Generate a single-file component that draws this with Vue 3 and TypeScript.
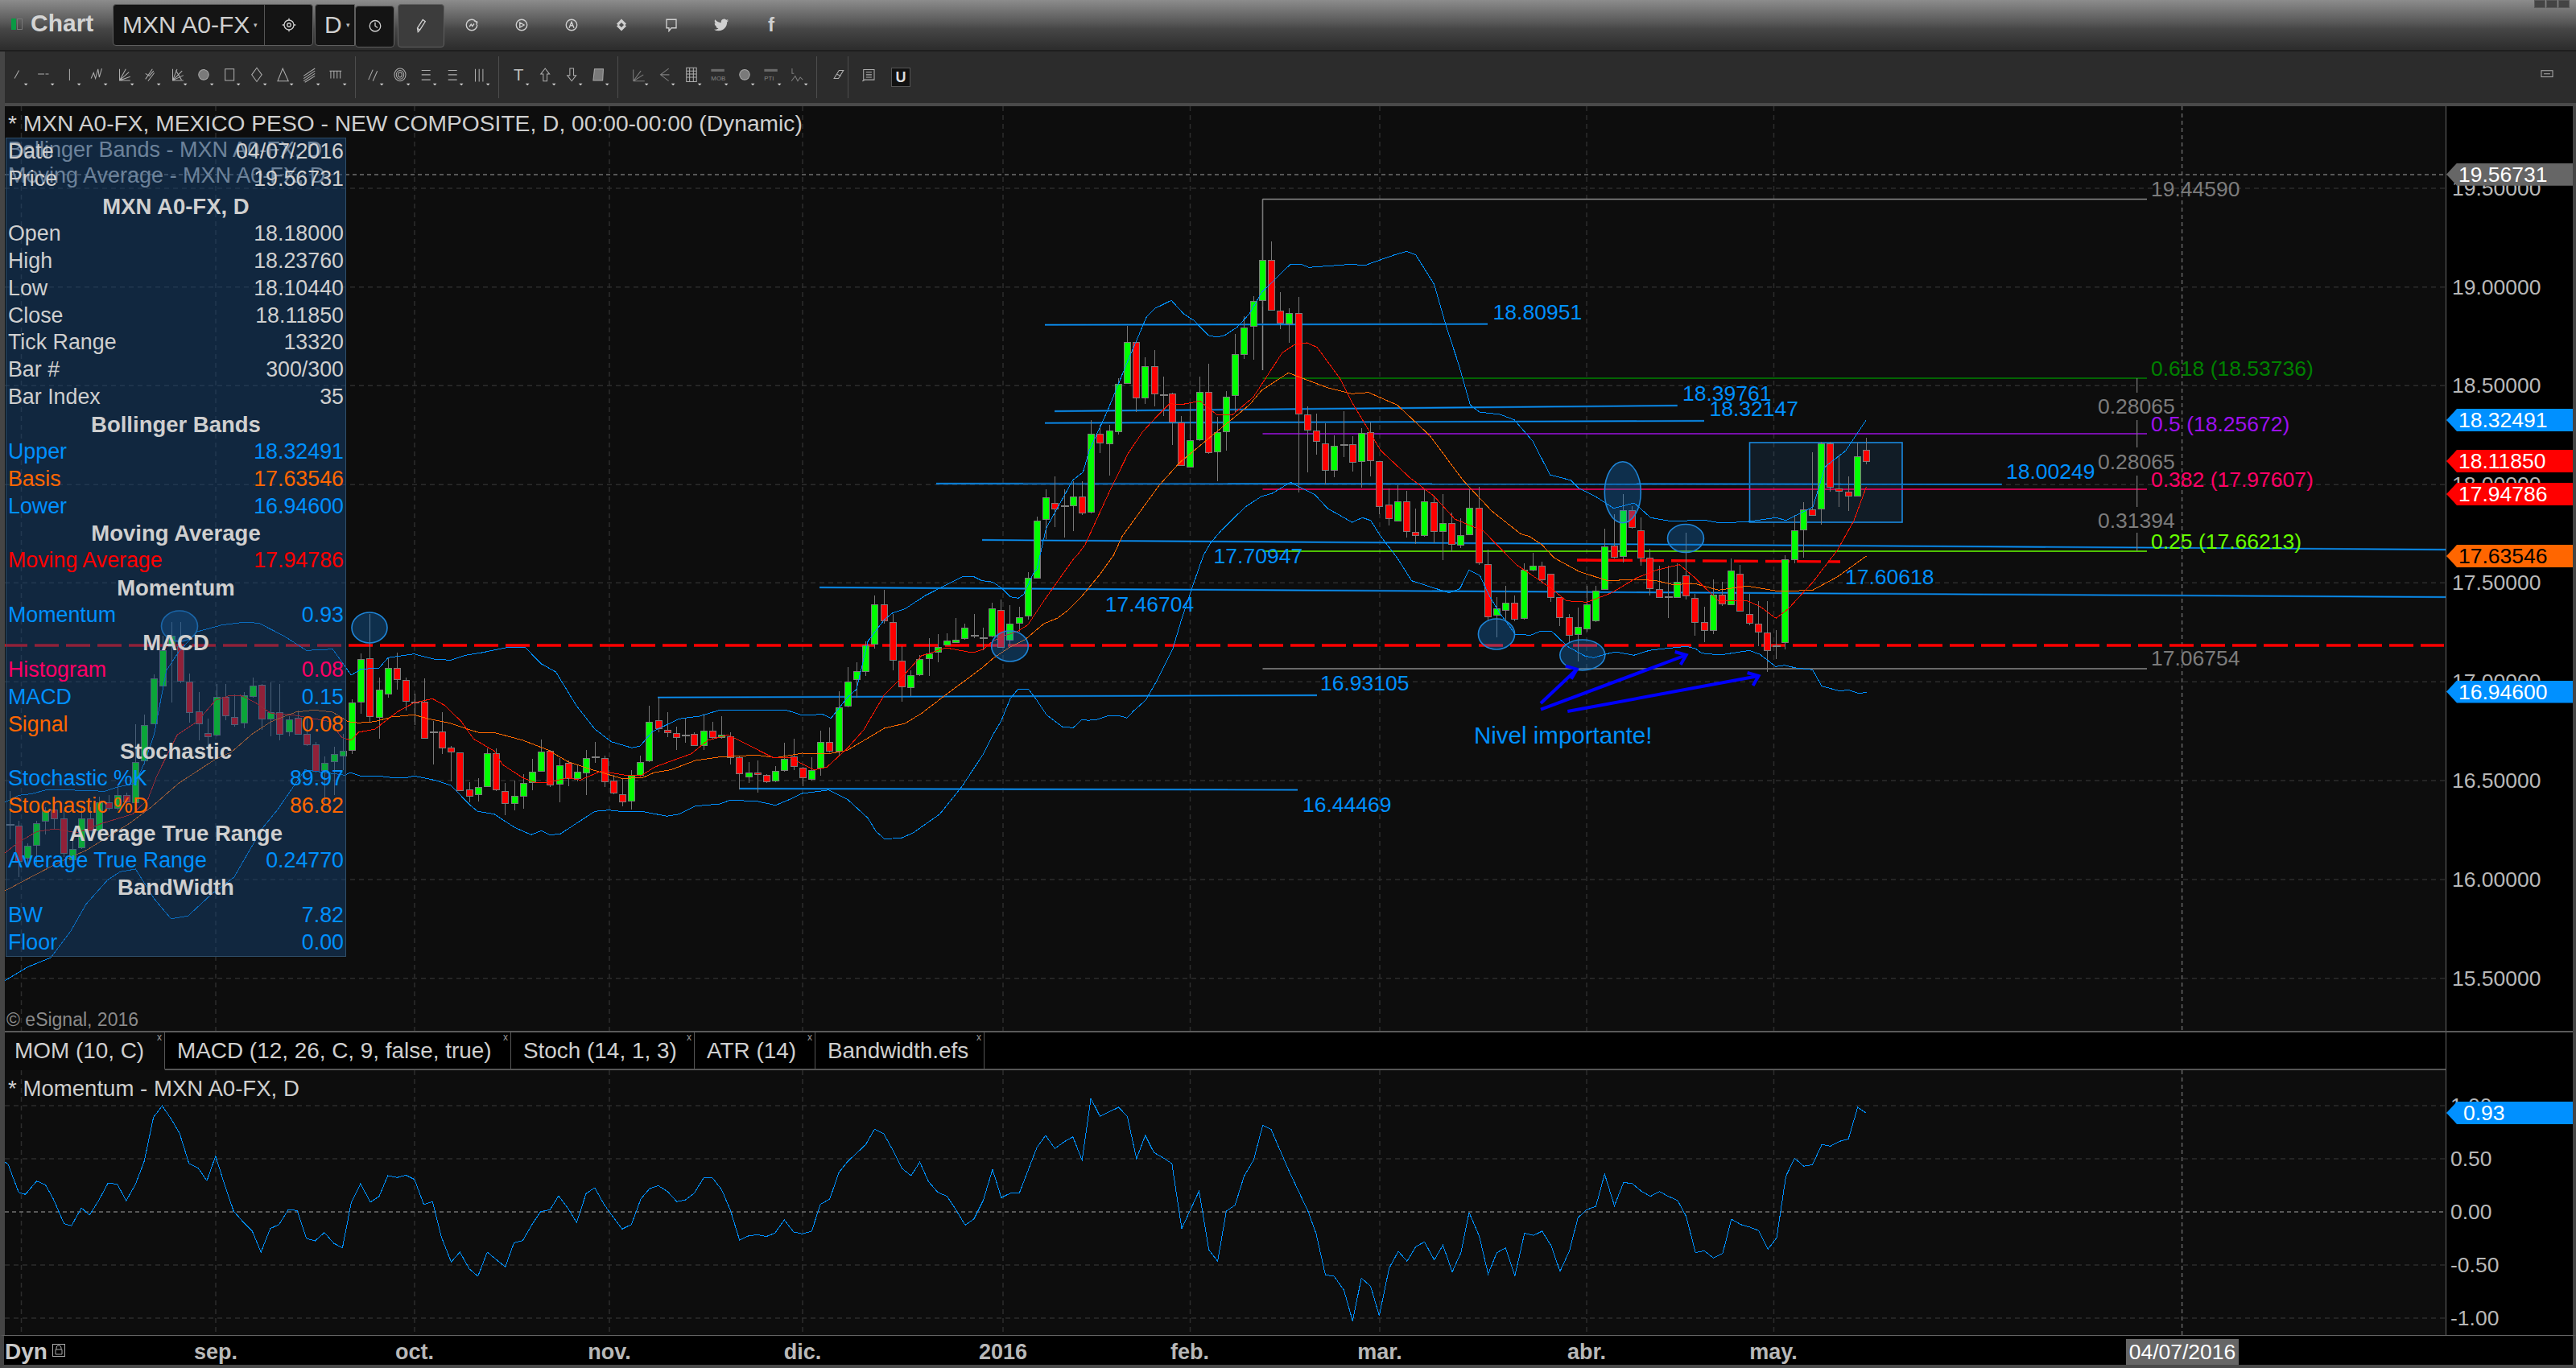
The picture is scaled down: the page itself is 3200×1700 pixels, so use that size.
<script setup lang="ts">
type P = [number, number]
type C = [number, number, number, number, number]

const map = (pts: P[], ox: number, sx: number, oy: number, sy: number): P[] =>
  pts.map(([x, y]) => [ox + x / sx, oy + y / sy] as P)
const line = (pts: P[]) => pts.map(([x, y]) => `${x.toFixed(1)},${y.toFixed(1)}`).join(' ')

const z3 = (p: P[]) => map(p, 0, 2.613, 740, 3)
const z8 = (p: P[]) => map(p, 420, 1.96, 700, 3)
const z9 = (p: P[]) => map(p, 1200, 1.96, 220, 3)
const z4 = (p: P[]) => map(p, 1900, 1.96, 400, 3)
const z10 = (p: P[]) => map(p, 1800, 2.613, 700, 3)
const z11 = (p: P[]) => map(p, 1200, 3, 690, 3)

const upper = line([
  ...z3([[10,775],[60,745],[100,740],[150,725],[220,725],[340,730],[380,715],[440,700],[470,620],[500,520],[540,280],[580,210],[640,135],[720,110],[790,100],[840,103],[920,150],[995,205],[1080,200],[1140,297]]),
  ...z8([[55,395],[100,390],[122,352],[185,338],[235,358],[275,361],[310,343],[350,333],[415,313],[455,313],[495,375],[530,405],[580,530],[625,618],[665,665],[715,688],[735,682],[765,628],[830,580],[880,570],[930,547],[1090,547],[1130,566],[1180,563],[1200,578],[1240,500],[1262,470],[1290,290],[1330,210],[1350,185],[1380,170],[1430,120],[1520,50]]),
  ...z11([[30,80],[60,95],[100,100],[130,120],[165,155],[195,160],[215,145],[250,70],[265,50]]),
  ...z9([[195,1310],[260,1130],[285,1100],[300,1020],[345,870],[390,700],[440,520],[460,490],[500,460],[530,510],[555,535],[590,590],[610,597],[630,590],[660,560],[690,510],[720,430],[790,325],[815,325],[835,337],[940,325],[970,330],[1040,292],[1073,277],[1095,290],[1140,400],[1170,560],[1200,700],[1228,850],[1250,876],[1300,885],[1335,905],[1380,985]]),
  ...z4([[50,570],[100,590],[120,620],[160,650],[205,695],[255,675],[295,730],[340,742],[430,740],[465,750],[530,745],[600,730],[625,740],[690,690],[720,540],[770,480],[820,365]]),
])
const lower = line([
  ...z3([[10,1440],[90,1385],[165,1350],[230,1250],[280,1150],[350,1060],[390,1030],[440,1020],[500,1130],[555,1205],[610,1195],[690,1110],[760,1050],[850,870],[900,800],[990,650],[1055,660],[1120,670]]),
  ...z8([[30,780],[55,793],[110,795],[135,800],[165,800],[185,793],[240,810],[275,828],[320,900],[340,925],[380,935],[430,985],[470,1012],[495,997],[515,1012],[540,1010],[580,970],[625,925],[660,920],[700,927],[740,925],[800,943],[830,935],[870,905],[930,897],[955,883],[1020,887],[1065,902],[1100,880],[1130,858],[1195,845],[1240,880],[1290,950],[1310,1000],[1330,1027],[1370,1025],[1400,1005],[1465,935],[1520,830]]),
  ...z11([[65,740],[100,670],[130,620],[165,535],[195,498],[232,498],[260,535],[300,595],[360,640],[400,643],[433,612],[455,616],[490,612],[530,598],[570,598],[600,607],[625,580],[670,540],[710,470],[770,350],[800,250],[850,100],[885,0]]),
  ...z9([[595,1365],[620,1320],[680,1230],[720,1190],[745,1180],[790,1138],[850,1185],[880,1235],[940,1287],[965,1270],[985,1280],[1010,1340],[1050,1420],[1085,1505]]),
  ...z10([[0,110],[35,95],[65,25],[100,45],[130,120],[165,185],[215,265],[265,268],[300,252],[335,255],[385,310],[440,345],[470,352],[505,340],[540,330],[600,343],[650,325],[700,318],[770,310],[800,318],[820,335],[880,342],[975,325],[1010,340],[1060,385],[1090,380],[1125,390],[1180,397],[1210,458],[1265,475],[1300,473],[1330,485],[1355,481]]),
])
const red = line([
  ...z3([[10,965],[60,920],[120,880],[180,870],[250,885],[330,850],[430,815],[480,760],[510,670],[575,520],[640,470],[700,390],[740,375],[780,372],[830,400],[880,440],[950,445],[1070,470],[1110,530],[1140,540]]),
  ...z8([[50,630],[90,618],[145,553],[185,520],[230,505],[260,530],[300,590],[330,655],[380,700],[400,750],[450,800],[480,817],[510,817],[560,800],[590,808],[640,775],[700,790],[740,790],[770,760],[860,710],[900,660],[950,640],[1060,725],[1100,725],[1160,770],[1190,760],[1240,690],[1280,620],[1330,490],[1370,430],[1420,345],[1480,315],[1540,332]]),
  ...z11([[30,362],[65,350],[100,320],[130,305],[190,285],[230,260],[290,170],[350,85],[400,15],[415,0]]),
  ...z9([[290,1370],[350,1170],[395,1030],[430,950],[460,900],[495,845],[525,848],[570,835],[610,885],[650,885],[700,820],[770,655],[800,625],[830,618],[855,635],[910,750],[940,840],[1010,1020],[1080,1120],[1140,1190],[1190,1275],[1260,1320],[1340,1445]]),
  ...z4([[50,990],[90,1040],[140,1045],[200,1010],[260,955],[310,925],[365,905],[400,950],[460,1040],[530,1040],[560,1060],[600,1105],[630,1070],[690,970],[750,850],[790,740],[820,615]]),
])
const orange = line([
  ...z3([[10,1105],[100,1050],[200,990],[280,950],[420,850],[490,790],[580,700],[700,610],[750,585],[820,515],[880,470],[960,435],[1020,427],[1080,435],[1130,470]]),
  ...z8([[50,595],[90,590],[130,573],[185,565],[220,580],[270,595],[340,630],[385,633],[450,660],[510,695],[560,740],[620,770],[690,802],[740,800],[770,780],[810,770],[870,735],[930,722],[1020,715],[1065,725],[1130,708],[1195,710],[1240,697],[1330,615],[1380,597],[1420,560],[1480,490]]),
  ...z11([[60,420],[100,385],[160,345],[220,315],[290,255],[340,235],[380,205],[430,155],[500,70],[550,0]]),
  ...z9([[380,1340],[470,1150],[520,1065],[610,950],[690,850],[720,795],[785,730],[810,745],[880,785],[940,808],[980,803],[1050,850],[1130,965],[1210,1130],[1280,1245],[1350,1330]]),
  ...z4([[0,800],[30,830],[60,880],[120,930],[190,965],[260,960],[310,965],[350,980],[400,975],[460,1000],[530,985],[610,1005],[690,1000],[750,950],[820,873]]),
])

const mom6: P[] = [[5,608],[12,620],[28,725],[38,733],[55,683],[68,697],[80,750],[96,842],[107,850],[122,783],[134,810],[148,755],[162,690],[176,695],[189,757],[203,695],[216,610],[230,445],[243,403],[256,450],[269,505],[283,617],[297,635],[310,682],[323,590],[337,700],[350,795],[364,835],[378,870],[391,948],[405,860],[418,845],[432,790],[445,793],[459,897],[472,906],[486,875],[500,915],[513,932],[526,765],[540,693],[555,762],[568,740],[581,663],[595,670],[608,661],[621,677],[635,770],[648,760],[661,890],[676,985],[689,948],[703,1010],[716,1038],[730,948],[743,975],[757,1003],[770,913],[783,905],[797,845],[810,797],[824,790],[837,738],[851,785],[864,838],[878,730],[891,708],[905,770],[918,815],[932,862],[946,845],[960,750],[973,712],[986,700],[1000,722],[1014,760],[1027,753],[1040,728],[1054,672],[1067,670],[1081,715],[1094,790],[1108,903],[1121,888],[1135,883],[1148,890],[1161,877],[1175,828],[1189,873],[1202,880],[1216,870],[1229,770],[1243,750],[1257,650],[1270,610],[1297,547],[1310,490],[1324,507],[1338,570],[1351,635],[1365,663],[1378,612],[1391,685],[1405,725],[1419,740],[1432,790],[1446,847],[1459,825],[1473,755],[1487,640],[1500,745],[1514,728],[1527,728]]
const mom12: P[] = [[12,258],[28,213],[45,262],[62,237],[78,218],[95,305],[111,75],[128,142],[162,108],[178,142],[195,300],[211,213],[227,277],[245,298],[260,318],[278,560],[310,420],[328,640],[344,682],[360,495],[376,473],[393,363],[410,305],[427,175],[442,190],[475,345],[510,495],[525,580],[542,733],[558,738],[576,790],[592,905],[608,745],[625,775],[641,885],[659,708],[676,645],[692,682],[708,628],[724,610],[742,677],[758,622],[775,722],[791,650],[806,500],[825,590],[841,730],[857,650],[873,632],[890,737],[908,577],[924,586],[940,570],[957,625],[973,720],[990,645],[1006,520],[1022,490],[1039,477],[1055,357],[1073,475],[1090,388],[1106,393],[1122,420],[1139,440],[1156,422],[1172,440],[1189,455],[1205,515],[1222,650],[1238,643],[1255,670],[1272,652],[1288,525],[1305,545],[1322,555],[1338,568],[1355,637],[1371,595],[1388,365],[1404,298],[1421,328],[1437,322],[1454,247],[1470,253],[1487,235],[1503,226],[1520,108],[1536,130]]
const momentum = line([...map(mom6, 0, 1.206, 1240, 3), ...map(mom12, 1280, 1.479, 1340, 3)])

const seg = (rows: C[], oy: number): C[] =>
  rows.map(([a, b, c, d, t]) => [oy + a / 3, oy + b / 3, oy + c / 3, oy + d / 3, t] as C)

const raw: C[] = [
  ...seg([[730,855,855,910,2],[840,857,990,1050,0],[925,932,977,1005,1],[840,850,932,1010,1],[790,800,838,890,1],[752,798,830,870,0],[800,832,962,975,0],[880,945,985,995,1],[790,832,940,945,1],[790,830,875,880,0],[750,772,878,882,1],[745,770,790,800,0],[705,745,793,800,1],[735,745,770,780,0],[480,620,770,775,1],[445,482,615,630,1],[295,308,475,480,1],[150,205,338,350,1],[100,150,190,400,1],[100,190,320,328,0],[290,320,433,475,0],[360,433,478,540,0],[460,512,523,560,0],[330,377,517,525,1],[330,378,448,465,0],[370,452,478,490,0],[360,373,475,495,1],[305,337,376,380,1],[330,332,457,500,0],[325,436,460,525,1],[330,436,517,540,0],[450,463,508,525,1],[430,457,517,520,0],[455,517,556,560,0],[545,554,652,660,0],[600,623,650,770,1],[565,590,617,745,1],[515,580,598,650,1]], 740),
  ...seg([[508,520,697,710,1],[335,358,517,562,1],[190,355,570,595,0],[425,472,575,655,1],[355,391,487,502,1],[333,391,433,470,0],[425,436,515,550,0],[487,519,519,603,2],[430,517,652,655,0],[588,630,630,750,2],[555,628,688,712,0],[682,688,703,812,0],[705,706,847,850,0],[815,844,868,890,0],[800,835,862,888,1],[690,709,832,835,1],[690,709,845,850,0],[820,850,895,938,0],[810,868,895,922,1],[785,820,868,915,1],[728,778,817,845,1],[658,703,775,778,1],[695,700,827,835,0],[725,754,822,890,1],[735,745,802,830,0],[750,778,802,812,1],[695,725,778,865,1],[665,722,722,745,2],[718,727,814,835,0],[790,811,857,860,0],[800,862,888,905,0],[770,790,886,918,1],[718,740,787,795,1],[530,592,737,740,1],[500,586,616,630,0],[555,622,631,648,0],[610,633,647,695,0],[578,641,641,670,2],[630,637,680,682,0],[560,625,680,695,1],[590,625,650,655,0],[570,640,650,655,1],[630,646,724,750,0],[720,724,785,842,0],[740,781,796,820,1],[735,781,787,855,0],[785,790,815,820,0],[755,775,810,815,1],[668,730,772,778,1],[655,720,757,770,0],[760,763,799,830,0],[722,770,802,810,1],[625,667,763,792,1],[612,667,700,705,0],[478,536,697,720,1],[388,442,532,537,1],[368,403,432,500,1],[290,305,400,420,1],[120,154,300,318,1],[98,154,214,225,0],[190,218,360,400,0],[310,364,460,515,0],[400,416,462,495,1],[342,356,412,420,1],[278,335,352,420,1],[265,311,330,370,1],[260,289,303,305,1],[205,284,292,295,1],[225,241,280,285,1],[190,269,269,280,2]], 700),
  ...seg([[270,308,308,355,2],[178,197,300,305,1],[165,203,340,345,0],[187,254,313,340,1],[192,230,250,285,1],[62,85,227,240,1]], 690),
  ...seg([[1265,1280,1492,1497,1],[1165,1195,1277,1350,1],[1115,1214,1235,1305,0],[1165,1227,1227,1345,2],[1135,1192,1225,1320,1],[1135,1190,1249,1260,0],[905,958,1250,1253,1],[925,958,990,1030,0],[925,946,995,1113,1],[750,770,946,960,1],[555,614,767,770,1],[612,614,822,875,0],[672,706,823,845,1],[645,706,808,855,0],[745,812,812,890,2],[805,808,913,1000,0],[890,914,1072,1075,0],[840,982,1080,1082,1],[745,800,978,985,1],[697,800,1024,1032,0],[895,952,1024,1133,1],[798,820,948,1020,1],[585,661,814,875,1],[520,560,658,678,1],[443,463,556,680,1],[82,310,460,482,1],[240,310,496,498,0],[430,499,544,568,0],[490,506,544,618,1],[447,506,880,1175,0],[855,886,943,1100,0],[882,946,985,1035,0],[918,992,1092,1145,0],[962,1003,1093,1118,1],[873,998,998,1045,2],[965,997,1063,1098,0],[935,955,1060,1157,1],[915,952,1056,1115,0],[1058,1060,1228,1258,0],[1160,1222,1272,1300,0],[1150,1210,1282,1285,1],[1170,1210,1320,1345,0],[1235,1323,1336,1368,0],[1160,1210,1336,1340,1],[1188,1213,1320,1365,0],[1182,1291,1320,1428,1],[1250,1291,1369,1398,0],[1272,1336,1372,1382,1],[1160,1234,1333,1336,1],[1155,1234,1438,1445,0]], 220),
  ...seg([[-50,2,197,215,0],[125,169,192,275,1],[85,146,172,215,1],[120,146,205,215,0],[0,25,205,210,1]], 700),
  ...seg([[860,910,925,930,1],[895,910,962,975,0],[938,940,1027,1045,0],[1025,1027,1102,1135,0],[1090,1102,1168,1195,0],[1065,1138,1165,1265,1],[985,1054,1145,1155,1],[985,1003,1115,1118,1],[770,838,998,1000,1],[718,835,878,882,0],[642,703,875,898,1],[688,703,767,770,0],[730,778,880,910,0],[845,878,993,1020,0],[910,995,1024,1020,0],[910,1025,1025,1103,2],[900,970,1026,1030,1],[785,946,1020,1035,0],[1015,1028,1117,1170,0],[1063,1118,1147,1195,0],[960,1017,1150,1165,1],[970,1017,1050,1060,0],[882,926,1051,1052,1],[905,938,1075,1078,0],[1015,1088,1120,1130,0],[1042,1124,1153,1210,0],[1042,1157,1224,1305,0],[1150,1208,1208,1258,2],[870,884,1192,1220,1],[720,776,883,900,1],[672,700,775,878,1],[485,700,720,722,0],[448,454,697,755,1],[447,454,616,632,0],[495,620,628,690,0],[575,632,646,705,0],[450,500,647,648,1],[432,476,517,530,0]], 400),
]
const candles = raw.map(([hi, top, bot, lo, t], i) => ({
  x: Math.round(11.5 + 11.197 * i) + 0.5,
  hi: Math.round(hi), top: Math.round(top), h: Math.max(Math.round(bot - top), 1), lo: Math.round(lo), t,
}))

const hGrid = [234, 356.7, 479.3, 602.3, 724.3, 847.3, 970, 1093, 1215.7]
const vGrid = [26.5, 268, 515, 757, 997, 1246, 1478.5, 1714, 1971, 2203.5]
const hGridM = [1374, 1440, 1572, 1638]

const fibs = [
  { y: 470, c: '#008000' }, { y: 539, c: '#9d10e0' }, { y: 608, c: '#ff0066' }, { y: 685, c: '#66ff00' },
  { y: 831, c: '#8a8a8a' }, { y: 247.5, c: '#8a8a8a' },
]
const trends = [
  [1298, 403.7, 1848, 402.7], [1310, 511, 2083.7, 504], [1298, 525.7, 2117, 523], [1163, 601, 2486.7, 601.7],
  [1220, 671, 3038, 683], [1018, 730, 3038, 742], [817, 866.7, 1636, 864], [918, 980, 1612, 981.5],
]
const measure = [[470, 488], [522, 556], [591, 630], [662, 685]]
const ellipses = [
  [223, 778, 22.5, 19], [459, 780, 22, 19], [1254.5, 803, 22.8, 19], [1859, 788, 22.6, 19],
  [1965.8, 814, 28, 19], [2015.8, 611.7, 22.5, 38], [2094, 669, 22.5, 17.5],
]
const arrows = [[1914, 874, 1958.8, 831.7], [1914, 881.7, 2094.7, 814], [1947.3, 884, 2184.6, 840]]
const labels = [
  { x: 1854.6, y: 388, t: '18.80951', c: '#0090ff' }, { x: 2090, y: 489, t: '18.39761', c: '#0090ff' },
  { x: 2123.5, y: 508, t: '18.32147', c: '#0090ff' }, { x: 2492, y: 586, t: '18.00249', c: '#0090ff' },
  { x: 1507.6, y: 691, t: '17.70947', c: '#0090ff' }, { x: 2292, y: 716.7, t: '17.60618', c: '#0090ff' },
  { x: 1372.7, y: 751, t: '17.46704', c: '#0090ff' }, { x: 1640, y: 849, t: '16.93105', c: '#0090ff' },
  { x: 1618, y: 1000, t: '16.44469', c: '#0090ff' },
  { x: 2672, y: 235, t: '19.44590', c: '#7c7c7c' }, { x: 2672, y: 458, t: '0.618 (18.53736)', c: '#008000' },
  { x: 2606, y: 505, t: '0.28065', c: '#7c7c7c' }, { x: 2672, y: 527, t: '0.5 (18.25672)', c: '#9d10f0' },
  { x: 2606, y: 574, t: '0.28065', c: '#7c7c7c' }, { x: 2672, y: 595.5, t: '0.382 (17.97607)', c: '#ff0066' },
  { x: 2606, y: 647, t: '0.31394', c: '#7c7c7c' }, { x: 2672, y: 672.6, t: '0.25 (17.66213)', c: '#66ff00' },
  { x: 2672, y: 818, t: '17.06754', c: '#7c7c7c' },
]

const axisTicks = [
  { y: 234, t: '19.50000' }, { y: 356.7, t: '19.00000' }, { y: 479.3, t: '18.50000' }, { y: 602.3, t: '18.00000' },
  { y: 724.3, t: '17.50000' }, { y: 847.3, t: '17.00000' }, { y: 970, t: '16.50000' }, { y: 1093, t: '16.00000' },
  { y: 1215.7, t: '15.50000' },
]
const axisTags = [
  { y: 216.7, t: '19.56731', bg: '#666666', c: '#ffffff' }, { y: 522, t: '18.32491', bg: '#0090ff', c: '#ffffff' },
  { y: 573, t: '18.11850', bg: '#ff0000', c: '#ffffff' }, { y: 614, t: '17.94786', bg: '#ff0000', c: '#ffffff' },
  { y: 691, t: '17.63546', bg: '#ff6600', c: '#000000' }, { y: 859.5, t: '16.94600', bg: '#0090ff', c: '#ffffff' },
]
const momTicks = [
  { y: 1374, t: '1.00' }, { y: 1440, t: '0.50' }, { y: 1506, t: '0.00' }, { y: 1572, t: '-0.50' }, { y: 1638, t: '-1.00' },
]

type Row = { l?: string; v?: string; h?: string; c?: string }
const rows: Row[] = [
  { l: 'Date', v: '04/07/2016' }, { l: 'Price', v: '19.56731' }, { h: 'MXN A0-FX, D' },
  { l: 'Open', v: '18.18000' }, { l: 'High', v: '18.23760' }, { l: 'Low', v: '18.10440' }, { l: 'Close', v: '18.11850' },
  { l: 'Tick Range', v: '13320' }, { l: 'Bar #', v: '300/300' }, { l: 'Bar Index', v: '35' },
  { h: 'Bollinger Bands' }, { l: 'Upper', v: '18.32491', c: 'blue' }, { l: 'Basis', v: '17.63546', c: 'orange' }, { l: 'Lower', v: '16.94600', c: 'blue' },
  { h: 'Moving Average' }, { l: 'Moving Average', v: '17.94786', c: 'red' },
  { h: 'Momentum' }, { l: 'Momentum', v: '0.93', c: 'blue' },
  { h: 'MACD' }, { l: 'Histogram', v: '0.08', c: 'pink' }, { l: 'MACD', v: '0.15', c: 'blue' }, { l: 'Signal', v: '0.08', c: 'orange' },
  { h: 'Stochastic' }, { l: 'Stochastic %K', v: '89.97', c: 'blue' }, { l: 'Stochastic %D', v: '86.82', c: 'orange' },
  { h: 'Average True Range' }, { l: 'Average True Range', v: '0.24770', c: 'blue' },
  { h: 'BandWidth' }, { l: 'BW', v: '7.82', c: 'blue' }, { l: 'Floor', v: '0.00', c: 'blue' },
]

const tabs = [
  { t: 'MOM (10, C)', w: 199, active: true }, { t: 'MACD (12, 26, C, 9, false, true)', w: 430 },
  { t: 'Stoch (14, 1, 3)', w: 228 }, { t: 'ATR (14)', w: 150 }, { t: 'Bandwidth.efs', w: 210 },
]
const months = [
  { x: 268, t: 'sep.' }, { x: 515, t: 'oct.' }, { x: 757, t: 'nov.' }, { x: 997, t: 'dic.' }, { x: 1246, t: '2016' },
  { x: 1478, t: 'feb.' }, { x: 1714, t: 'mar.' }, { x: 1971, t: 'abr.' }, { x: 2203, t: 'may.' },
]

type Tool = { d?: string; t?: string; fill?: boolean; cls?: string }
const group1: Tool[] = [
  { d: 'M7 20L14 7' }, { d: 'M2 13h10M14 13h5' }, { d: 'M10 5v18' }, { d: 'M2 20L6 11l3 9L13 5l2 13 4-14' },
  { d: 'M5 5V23H22M5 23L15 5M5 23L20 10M5 23L22 17' }, { d: 'M4 21L15 5M8 24L18 11M4 12l6 4 7-8' },
  { d: 'M5 5V23H22M5 23L12 5M5 23L20 8M5 23L22 15M10 7l9 15' }, { d: 'M4 14a8 8 0 1 0 16 0a8 8 0 1 0-16 0', fill: true },
  { d: 'M4 5h14v18H4z' }, { d: 'M12 3L20 14 12 25 4 14z' }, { d: 'M11 4L20 24H3z' },
  { d: 'M2 16L20 4M2 20L20 8M2 24L20 12M4 26L20 16' }, { d: 'M3 8V20M8 8V20M13 8V20M18 8V20M1 8H20' },
]
const group2: Tool[] = [
  { d: 'M4 22L11 6M11 24L18 8' }, { d: 'M3 14a9 10 0 1 0 18 0a9 10 0 1 0-18 0M6 14a6 7 0 1 0 12 0a6 7 0 1 0-12 0M9 14a3 4 0 1 0 6 0a3 4 0 1 0-6 0' },
  { d: 'M4 7h14M4 14h14M4 22h14' }, { d: 'M4 7h14M4 14h14M4 22h14' }, { d: 'M5 5v20M11 5v20M17 5v20' },
]
const group3: Tool[] = [
  { t: 'T' }, { d: 'M11 4l7 9h-4v11H8V13H4z' }, { d: 'M8 4h6v11h4l-7 9-7-9h4z' }, { d: 'M5 5h14l-1 18H3z', fill: true, cls: 'dim' },
]
const group4: Tool[] = [
  { d: 'M4 24V6M4 24h18M4 24L16 8M4 24L20 14', cls: 'dim' }, { d: 'M18 4L5 14 18 24M5 14h14', cls: 'dim' },
  { d: 'M4 3h16v22H4zM4 8h16M4 13h16M4 18h16M9 3v22M15 3v22' }, { t: 'MOB', cls: 'small' },
  { d: 'M4 14a8 8 0 1 0 16 0a8 8 0 1 0-16 0', fill: true }, { t: 'PTI', cls: 'small' }, { d: 'M3 4v8h3M2 24l6-8 4 8 4-6 4 4', cls: 'dim' },
]
const caret = 'M22 28h6l-3 3z'
const twitter = 'M23.953 4.57a10 10 0 01-2.825.775 4.958 4.958 0 002.163-2.723c-.951.555-2.005.959-3.127 1.184a4.92 4.92 0 00-8.384 4.482C7.69 8.095 4.067 6.13 1.64 3.162a4.822 4.822 0 00-.666 2.475c0 1.71.87 3.213 2.188 4.096a4.904 4.904 0 01-2.228-.616v.06a4.923 4.923 0 003.946 4.827 4.996 4.996 0 01-2.212.085 4.936 4.936 0 004.604 3.417 9.867 9.867 0 01-6.102 2.105c-.39 0-.779-.023-1.17-.067a13.995 13.995 0 007.557 2.209c9.053 0 13.998-7.496 13.998-13.985 0-.21 0-.42-.015-.63A9.935 9.935 0 0024 4.59z'
const topIcons = [
  'M12 3a9 9 0 1 0 9 9M12 3c3 0 6 2 8 5M16 5l5 2-1 5M8 15l3-4 2 3 3-4',
  'M12 3a9 9 0 1 0 0 18a9 9 0 1 0 0-18M9 8l7 4-7 4z',
  'M12 3a9 9 0 1 0 0 18a9 9 0 1 0 0-18M8 17l4-10 4 10M9.5 13h5',
  'M12 2l8 8-3 3-5-5-5 5-3-3zM12 22l-8-8 3-3 5 5 5-5 3 3z',
  'M4 3h16v14h-8l-4 5v-5H4z',
]
const toolBox = '-4 -5 41 46'
</script>

<template>
  <div class="app">
    <header class="titlebar">
      <span class="logo"><i class="bar-g"></i><i class="bar-o"></i></span>
      <span class="brand">Chart</span>
      <div class="sym-box">
        <span class="sym">MXN A0-FX</span><span class="mini">▾</span>
        <span class="sym-gear">
          <svg class="t-ico" viewBox="0 0 24 24"><circle cx="12" cy="12" r="8" /><circle cx="12" cy="12" r="3" /><path d="M12 1v3M12 20v3M1 12h3M20 12h3" /></svg>
        </span>
      </div>
      <div class="int-box"><span class="sym">D</span><span class="mini">▾</span></div>
      <div class="clock-box">
        <svg class="t-ico" viewBox="0 0 24 24"><circle cx="12" cy="11" r="9" /><path d="M12 5v6l4 3" /></svg>
      </div>
      <div class="pen-box">
        <svg class="t-ico" viewBox="0 0 24 24"><path d="M7 22l-1-6L15 2l4 3-9 14zM6 16l4 3" /></svg>
      </div>
      <span v-for="(d, i) in topIcons.slice(0, 3)" :key="'a' + i" class="top-cell">
        <svg class="t-ico" viewBox="0 0 24 24"><path :d="d" /></svg>
      </span>
      <span class="top-cell"><svg class="t-ico solid" viewBox="0 0 24 24"><path :d="topIcons[3]" /></svg></span>
      <span class="top-cell"><svg class="t-ico" viewBox="0 0 24 24"><path :d="topIcons[4]" /></svg></span>
      <span class="top-cell"><svg class="t-ico solid" viewBox="0 0 24 24"><path :d="twitter" /></svg></span>
      <span class="top-cell fb">f</span>
      <div class="win-ctl"><i></i><i></i><i></i></div>
    </header>

    <div class="toolbar">
      <div class="tool-group">
        <svg v-for="(it, i) in group1" :key="i" class="tool" :viewBox="toolBox"><path v-if="it.d" :d="it.d" :class="{ filled: it.fill }" /><path class="car" :d="caret" /></svg>
      </div>
      <i class="sep first"></i>
      <div class="tool-group">
        <svg v-for="(it, i) in group2" :key="i" class="tool" :viewBox="toolBox"><path v-if="it.d" :d="it.d" /><path class="car" :d="caret" /></svg>
      </div>
      <i class="sep"></i>
      <div class="tool-group">
        <svg v-for="(it, i) in group3" :key="i" class="tool" :class="it.cls" :viewBox="toolBox">
          <path v-if="it.d" :d="it.d" :class="{ filled: it.fill }" />
          <text v-if="it.t" x="11" y="23" class="tool-t">{{ it.t }}</text>
          <path class="car" :d="caret" />
        </svg>
      </div>
      <i class="sep"></i>
      <div class="tool-group">
        <svg v-for="(it, i) in group4" :key="i" class="tool" :class="it.cls" :viewBox="toolBox">
          <path v-if="it.d" :d="it.d" :class="{ filled: it.fill }" />
          <template v-if="it.t">
            <rect x="1" y="5" width="21" height="4" class="tool-bar" />
            <text x="1" y="23" class="tool-s">{{ it.t }}</text>
          </template>
          <path class="car" :d="caret" />
        </svg>
      </div>
      <i class="sep"></i>
      <svg class="tool eraser" :viewBox="toolBox"><path d="M7 20L15 7h7l-8 13zM11 13l7 3" /></svg>
      <i class="sep"></i>
      <svg class="tool" :viewBox="toolBox"><path d="M4 6h17v16H4zM8 10h9M8 14h9M8 18h9M2 24l3-1" /></svg>
      <span class="u-btn">U</span>
      <span class="tool-end"><svg class="tool" :viewBox="toolBox"><path d="M3 10h18v10H3zM7 15h10" /></svg></span>
    </div>

    <section class="main">
      <div class="plot">
        <svg class="plot-svg" viewBox="6 132 3032 1149" width="3032" height="1149">
          <g class="grid">
            <line v-for="y in hGrid" :key="'h' + y" x1="6" x2="3038" :y1="y" :y2="y" />
            <line v-for="x in vGrid" :key="'v' + x" :x1="x" :x2="x" y1="132" y2="1281" />
          </g>
          <g class="cross">
            <line x1="6" x2="3038" y1="217" y2="217" />
            <line x1="2710.6" x2="2710.6" y1="132" y2="1281" />
          </g>

          <rect x="2173.5" y="550" width="189.5" height="99" class="box" />
          <line v-for="(f, i) in fibs" :key="'f' + i" x1="1568.5" x2="2667" :y1="f.y" :y2="f.y" :stroke="f.c" stroke-width="1.5" />
          <line x1="1568.5" x2="1568.5" y1="247.5" y2="460" class="fib-v" />
          <line v-for="(t, i) in trends" :key="'t' + i" :x1="t[0]" :y1="t[1]" :x2="t[2]" :y2="t[3]" class="trend-shadow" />
          <line v-for="(t, i) in trends" :key="'ts' + i" :x1="t[0]" :y1="t[1]" :x2="t[2]" :y2="t[3]" class="trend" />
          <line x1="4" y1="802" x2="3036" y2="802" class="dash" />
          <line x1="1959" y1="696" x2="2286" y2="698" class="dash" />

          <g shape-rendering="crispEdges">
            <template v-for="(c, i) in candles" :key="'c' + i">
              <line :x1="c.x" :x2="c.x" :y1="c.hi" :y2="c.lo" class="wick" />
              <line v-if="c.t === 2" :x1="c.x - 5" :x2="c.x + 5" :y1="c.top" :y2="c.top" class="doji" />
              <rect v-else :x="c.x - 4" :y="c.top" width="8" :height="c.h" :class="c.t === 1 ? 'up' : 'down'" />
            </template>
          </g>

          <polyline :points="upper" class="band" />
          <polyline :points="lower" class="band" />
          <polyline :points="orange" class="ma-o" />
          <polyline :points="red" class="ma-r" />

          <ellipse v-for="(e, i) in ellipses" :key="'e' + i" :cx="e[0]" :cy="e[1]" :rx="e[2]" :ry="e[3]" class="ell" />

          <g v-for="(a, i) in arrows" :key="'ar' + i">
            <line :x1="a[0]" :y1="a[1]" :x2="a[2]" :y2="a[3]" class="arrow" />
            <polyline :points="`${a[2] - 14},${a[3] - 4} ${a[2]},${a[3]} ${a[2] - 7},${a[3] + 12}`" class="arrow-h" />
          </g>

          <line v-for="(m, i) in measure" :key="'m' + i" x1="2654.7" x2="2654.7" :y1="m[0]" :y2="m[1]" class="meas" />
          <text v-for="(l, i) in labels" :key="'l' + i" :x="l.x" :y="l.y" :fill="l.c" class="lab">{{ l.t }}</text>
          <text x="1831" y="913" class="nivel">Nivel importante!</text>

          <text x="10" y="186" class="ghost">Bollinger Bands - MXN A0-FX, D</text>
          <text x="10" y="218" class="ghost">Moving Average - MXN A0-FX, D</text>
          <text x="10" y="153" class="main-title">* MXN A0-FX, MEXICO PESO - NEW COMPOSITE, D, 00:00-00:00 (Dynamic)</text>
          <text x="8" y="1267" class="copy">© eSignal, 2016</text>
        </svg>

        <div class="cursor-panel">
          <div v-for="(r, i) in rows" :key="i" class="row" :class="[r.c, { head: r.h }]">
            <template v-if="r.h">{{ r.h }}</template>
            <template v-else><span>{{ r.l }}</span><span>{{ r.v }}</span></template>
          </div>
        </div>
      </div>

      <aside class="axis">
        <span v-for="t in axisTicks" :key="t.t" class="tick" :style="{ top: t.y - 132 + 'px' }">{{ t.t }}</span>
        <span v-for="t in axisTags" :key="t.t" class="tag" :style="{ top: t.y - 132 + 'px', background: t.bg, color: t.c }">{{ t.t }}</span>
      </aside>
    </section>

    <div class="tab-row">
      <div class="tabs">
        <div v-for="t in tabs" :key="t.t" class="tab" :class="{ active: t.active }" :style="{ width: t.w + 'px' }">
          {{ t.t }}<span class="x">x</span>
        </div>
        <div class="tab-fill"></div>
      </div>
      <div class="axis-stub"></div>
    </div>

    <section class="momentum">
      <div class="plot">
        <svg class="plot-svg" viewBox="6 1330 3032 329" width="3032" height="329">
          <g class="grid">
            <line v-for="y in hGridM" :key="'h' + y" x1="6" x2="3038" :y1="y" :y2="y" />
            <line v-for="x in vGrid" :key="'v' + x" :x1="x" :x2="x" y1="1330" y2="1659" />
          </g>
          <g class="cross">
            <line x1="6" x2="3038" y1="1506" y2="1506" />
            <line x1="2710.6" x2="2710.6" y1="1330" y2="1659" />
          </g>
          <polyline :points="momentum" class="band" />
          <text x="10" y="1352" class="mom-title">* Momentum - MXN A0-FX, D</text>
        </svg>
      </div>
      <aside class="axis">
        <span v-for="t in momTicks" :key="t.t" class="tick m" :style="{ top: t.y - 1330 + 'px' }">{{ t.t }}</span>
        <span class="tag m" :style="{ top: 1383 - 1330 + 'px', background: '#0090ff', color: '#fff' }">0.93</span>
      </aside>
    </section>

    <footer class="time">
      <span class="dyn">Dyn</span>
      <svg class="lock" viewBox="0 0 16 16"><rect x="0.5" y="0.5" width="15" height="15" /><path d="M5 7V5a3 3 0 0 1 6 0v2M4 7h8v6H4z" /></svg>
      <span v-for="m in months" :key="m.t" class="mon" :style="{ left: m.x - 5 + 'px' }">{{ m.t }}</span>
      <span class="date-tag">04/07/2016</span>
    </footer>
  </div>
</template>

<style scoped>
.app {
  width: 3200px;
  height: 1700px;
  display: flex;
  flex-direction: column;
  background: #454545;
  font-family: "Liberation Sans", Arial, sans-serif;
  overflow: hidden;
  position: relative;
  color: #c8c8c8;
}
.titlebar {
  height: 64px;
  flex: none;
  display: flex;
  align-items: flex-start;
  padding-left: 14px;
  box-sizing: border-box;
  background: linear-gradient(#8c8c8c 0, #6e6e6e 16px, #585858 28px, #464646 36px, #2e2e2e 60px);
  border-bottom: 2px solid #1e1e1e;
  position: relative;
}
.logo { display: flex; gap: 1px; margin-top: 23px; width: 16px; }
.bar-g { width: 6px; height: 14px; background: #0a9a44; }
.bar-o { width: 7px; height: 14px; border: 1px solid #777; box-sizing: border-box; }
.brand { font-weight: 700; font-size: 30px; line-height: 58px; margin-left: 8px; width: 102px; color: #d4d4d4; height: 58px; }
.sym-box, .int-box, .clock-box {
  height: 52px;
  margin-top: 5px;
  background: #141414;
  border: 1px solid #5f5f5f;
  border-radius: 4px;
  box-sizing: border-box;
  display: flex;
  align-items: center;
  color: #d0d0d0;
}
.sym-box { width: 249px; padding-left: 11px; position: relative; }
.sym { font-size: 30px; }
.mini { font-size: 9px; margin-left: 5px; color: #bbb; }
.sym-gear { position: absolute; right: 0; top: 0; bottom: 0; width: 59px; border-left: 1px solid #555; display: flex; align-items: center; justify-content: center; }
.int-box { width: 50px; margin-left: 2px; padding-left: 11px; border-radius: 4px 0 0 4px; }
.clock-box { width: 49px; margin-top: 7px; justify-content: center; }
.pen-box {
  width: 58px; height: 54px; margin-top: 5px; margin-left: 4px;
  background: #3c3c3c; border: 1px solid #5f5f5f; border-radius: 4px; box-sizing: border-box;
  display: flex; align-items: center; justify-content: center;
}
.top-cell { width: 62px; height: 62px; display: flex; align-items: center; justify-content: center; }
.pen-box + .top-cell { margin-left: 3px; }
.t-ico { width: 18px; height: 18px; fill: none; stroke: #d0d0d0; stroke-width: 1.8; }
.t-ico.solid { fill: #d0d0d0; stroke: none; }
.fb { font-family: "Liberation Sans", sans-serif; font-weight: 700; font-size: 24px; color: #d0d0d0; }
.win-ctl { position: absolute; top: 0; right: 8px; display: flex; gap: 1px; }
.win-ctl i { width: 14px; height: 10px; background: #444; border: 1px solid #5a5a5a; box-sizing: border-box; display: block; }

.toolbar {
  height: 68px;
  flex: none;
  box-sizing: border-box;
  margin-left: 6px;
  padding-left: 3px;
  background: #2c2c2c;
  border-bottom: 4px solid #4a4a4a;
  display: flex;
  align-items: center;
  position: relative;
}
.tool-group { display: flex; }
.tool { width: 33px; height: 36px; fill: none; stroke: #aeaeae; stroke-width: 1.3; flex: none; }
.tool .car { fill: #d8d8d8; stroke: none; }
.tool .filled { fill: #7a7a7a; stroke: #aaa; }
.tool.dim { stroke: #7e7e7e; }
.tool.small { stroke: none; }
.tool.eraser { margin-right: -10px; }
.tool-t { font-family: "Liberation Sans", sans-serif; font-size: 26px; fill: #c0c0c0; stroke: none; text-anchor: middle; }
.tool-s { font-family: "Liberation Sans", sans-serif; font-size: 10px; fill: #888; stroke: none; }
.tool-bar { fill: #6a6a6a; stroke: none; }
.sep { width: 1px; height: 52px; background: #4d4d4d; flex: none; margin: 0 12px 0 3px; }
.sep.first { margin-right: 9px; }
.u-btn {
  width: 24px; height: 24px; background: #111; border: 1px solid #555; box-sizing: border-box;
  font-weight: 700; font-size: 18px; line-height: 22px; text-align: center; color: #ddd; margin-left: 8px;
}
.tool-end { margin-left: auto; margin-right: 16px; }

.main { height: 1149px; flex: none; display: flex; }
.momentum { height: 329px; flex: none; display: flex; }
.plot { position: relative; margin-left: 6px; width: 3032px; background: #0d0d0d; flex: none; }
.plot-svg { display: block; position: absolute; left: 0; top: 0; }
.axis {
  width: 158px;
  flex: none;
  position: relative;
  background: #000;
  border-left: 1px solid #666;
  box-sizing: border-box;
}
.tick { position: absolute; left: 7px; font-size: 26.5px; line-height: 28px; margin-top: -14px; color: #b8b8b8; }
.tick.m { left: 5px; }
.tag {
  position: absolute; left: 0; width: 157px; height: 28px; margin-top: -14px; font-size: 26.5px; line-height: 28px;
  padding-left: 15px; box-sizing: border-box;
  clip-path: polygon(0 50%, 13px 0, 100% 0, 100% 100%, 13px 100%);
}
.tag.m { padding-left: 21px; }

.grid line { stroke: #2d2d2d; stroke-width: 1.5; stroke-dasharray: 6 5; }
.cross line { stroke: #707070; stroke-width: 1.3; stroke-dasharray: 5 4; }
.box { fill: rgba(40, 120, 190, 0.14); stroke: #1a8ae0; stroke-width: 1.6; }
.fib-v { stroke: #8a8a8a; stroke-width: 1.5; }
.trend-shadow { stroke: #0c4a80; stroke-width: 2.4; }
.trend { stroke: #0a90f0; stroke-width: 1.3; }
.dash { stroke: #ff0000; stroke-width: 3.4; stroke-dasharray: 30 9; }
.wick { stroke: #777; stroke-width: 1; }
.doji { stroke: #808080; stroke-width: 2; }
.up { fill: #00ff00; stroke: #7c7c7c; stroke-width: 1; }
.down { fill: #ff0000; stroke: #7c7c7c; stroke-width: 1; }
.band { fill: none; stroke: #0090ff; stroke-width: 1; shape-rendering: crispEdges; }
.ma-o { fill: none; stroke: #ff6a00; stroke-width: 1; shape-rendering: crispEdges; }
.ma-r { fill: none; stroke: #ff1500; stroke-width: 1; shape-rendering: crispEdges; }
.ell { fill: rgba(20, 120, 210, 0.32); stroke: #1e85d8; stroke-width: 1.6; }
.arrow { stroke: #0000ff; stroke-width: 4; }
.arrow-h { fill: none; stroke: #0000ff; stroke-width: 4; }
.meas { stroke: #7c7c7c; stroke-width: 1.2; }
.lab { font-family: "Liberation Sans", sans-serif; font-size: 26.5px; dominant-baseline: central; }
.nivel { font-family: "Liberation Sans", sans-serif; font-size: 29.5px; dominant-baseline: central; fill: #0090ff; }
.ghost { font-family: "Liberation Sans", sans-serif; font-size: 27px; dominant-baseline: central; fill: #bbb; }
.main-title { font-family: "Liberation Sans", sans-serif; font-size: 28.2px; dominant-baseline: central; fill: #cfcfcf; }
.mom-title { font-family: "Liberation Sans", sans-serif; font-size: 27.6px; dominant-baseline: central; fill: #cfcfcf; }
.copy { font-family: "Liberation Sans", sans-serif; font-size: 23px; dominant-baseline: central; fill: #8a8a8a; }

.cursor-panel {
  position: absolute;
  left: 1px;
  top: 39px;
  width: 423px;
  height: 1018px;
  box-sizing: border-box;
  padding: 0 2px;
  background: rgba(23, 69, 119, 0.48);
  border: 1px solid #2f4f6a;
  display: grid;
  grid-auto-rows: 1fr;
  font-size: 26.8px;
  color: #cfcfcf;
}
.row { display: flex; justify-content: space-between; align-items: center; white-space: nowrap; }
.row.head { justify-content: center; font-weight: 700; font-size: 27.5px; color: #cfcfcf; }
.row.blue { color: #0090ff; }
.row.orange { color: #ff6600; }
.row.red { color: #ff0000; }
.row.pink { color: #ff0066; }

.tab-row {
  height: 49px;
  flex: none;
  display: flex;
  border-top: 2px solid #5a5a5a;
  box-sizing: border-box;
  margin-left: 6px;
  margin-right: 4px;
  background: #000;
}
.tabs { width: 3032px; display: flex; flex: none; }
.tab {
  box-sizing: border-box; flex: none; position: relative; display: flex; align-items: center;
  padding-left: 15px; font-size: 27.9px; border-right: 1px solid #555; border-bottom: 2px solid #555; color: #cfcfcf;
  white-space: nowrap;
}
.tab.active { border-bottom-color: transparent; background: #0a0a0a; padding-left: 12px; }
.tab .x { position: absolute; right: 3px; top: -1px; font-size: 12px; color: #999; line-height: 14px; }
.tab-fill { flex: 1; border-bottom: 2px solid #555; }
.axis-stub { width: 158px; border-left: 1px solid #666; box-sizing: border-box; }

.time {
  height: 41px;
  flex: none;
  box-sizing: border-box;
  border-top: 1px solid #666;
  border-bottom: 4px solid #4a4a4a;
  border-left: 5px solid #454545;
  border-right: 4px solid #454545;
  position: relative;
  background: #000;
}
.dyn { position: absolute; left: 1px; top: 2px; font-weight: 700; font-size: 28px; line-height: 36px; color: #c8c8c8; }
.lock { position: absolute; left: 60px; top: 10px; width: 16px; height: 16px; fill: none; stroke: #aaa; stroke-width: 1; }
.mon { position: absolute; top: 2px; transform: translateX(-50%); font-weight: 700; font-size: 27px; line-height: 36px; color: #b8b8b8; }
.date-tag { position: absolute; left: 2636px; top: 4px; width: 140px; height: 32px; background: #666; color: #fff; font-size: 26.5px; line-height: 32px; text-align: center; }
</style>

<style>
html, body { margin: 0; background: #000; }
</style>
